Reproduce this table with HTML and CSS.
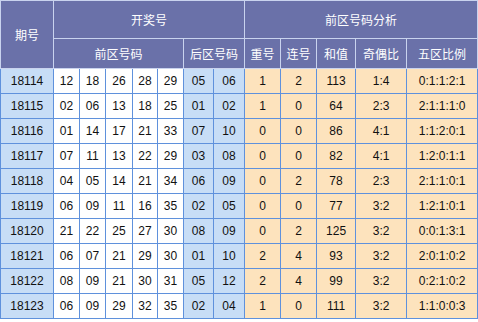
FILE: index.html
```html
<!DOCTYPE html>
<html>
<head>
<meta charset="utf-8">
<link rel="stylesheet" href="styles.css">
</head>
<body>
<table class="grid">
  <colgroup>
    <col class="c-issue">
    <col class="c26"><col class="c26"><col class="c27"><col class="c25"><col class="c26">
    <col class="c30"><col class="c31">
    <col class="c36"><col class="c36"><col class="c39"><col class="c51"><col class="c71">
  </colgroup>
  <thead>
    <tr class="h1">
      <th rowspan="2">期号</th>
      <th colspan="7">开奖号</th>
      <th colspan="5">前区号码分析</th>
    </tr>
    <tr class="h2">
      <th colspan="5">前区号码</th>
      <th colspan="2">后区号码</th>
      <th>重号</th><th>连号</th><th>和值</th><th>奇偶比</th><th>五区比例</th>
    </tr>
  </thead>
  <tbody>
    <tr><td class="blue">18114</td><td>12</td><td>18</td><td>26</td><td>28</td><td>29</td><td class="blue">05</td><td class="blue">06</td><td class="peach">1</td><td class="peach">2</td><td class="peach">113</td><td class="peach">1:4</td><td class="peach">0:1:1:2:1</td></tr>
    <tr><td class="blue">18115</td><td>02</td><td>06</td><td>13</td><td>18</td><td>25</td><td class="blue">01</td><td class="blue">02</td><td class="peach">1</td><td class="peach">0</td><td class="peach">64</td><td class="peach">2:3</td><td class="peach">2:1:1:1:0</td></tr>
    <tr><td class="blue">18116</td><td>01</td><td>14</td><td>17</td><td>21</td><td>33</td><td class="blue">07</td><td class="blue">10</td><td class="peach">0</td><td class="peach">0</td><td class="peach">86</td><td class="peach">4:1</td><td class="peach">1:1:2:0:1</td></tr>
    <tr><td class="blue">18117</td><td>07</td><td>11</td><td>13</td><td>22</td><td>29</td><td class="blue">03</td><td class="blue">08</td><td class="peach">0</td><td class="peach">0</td><td class="peach">82</td><td class="peach">4:1</td><td class="peach">1:2:0:1:1</td></tr>
    <tr><td class="blue">18118</td><td>04</td><td>05</td><td>14</td><td>21</td><td>34</td><td class="blue">06</td><td class="blue">09</td><td class="peach">0</td><td class="peach">2</td><td class="peach">78</td><td class="peach">2:3</td><td class="peach">2:1:1:0:1</td></tr>
    <tr><td class="blue">18119</td><td>06</td><td>09</td><td>11</td><td>16</td><td>35</td><td class="blue">02</td><td class="blue">05</td><td class="peach">0</td><td class="peach">0</td><td class="peach">77</td><td class="peach">3:2</td><td class="peach">1:2:1:0:1</td></tr>
    <tr><td class="blue">18120</td><td>21</td><td>22</td><td>25</td><td>27</td><td>30</td><td class="blue">08</td><td class="blue">09</td><td class="peach">0</td><td class="peach">2</td><td class="peach">125</td><td class="peach">3:2</td><td class="peach">0:0:1:3:1</td></tr>
    <tr><td class="blue">18121</td><td>06</td><td>07</td><td>21</td><td>29</td><td>30</td><td class="blue">01</td><td class="blue">10</td><td class="peach">2</td><td class="peach">4</td><td class="peach">93</td><td class="peach">3:2</td><td class="peach">2:0:1:0:2</td></tr>
    <tr><td class="blue">18122</td><td>08</td><td>09</td><td>21</td><td>30</td><td>31</td><td class="blue">05</td><td class="blue">12</td><td class="peach">2</td><td class="peach">4</td><td class="peach">99</td><td class="peach">3:2</td><td class="peach">0:2:1:0:2</td></tr>
    <tr><td class="blue">18123</td><td>06</td><td>09</td><td>29</td><td>32</td><td>35</td><td class="blue">02</td><td class="blue">04</td><td class="peach">1</td><td class="peach">0</td><td class="peach">111</td><td class="peach">3:2</td><td class="peach">1:1:0:0:3</td></tr>
  </tbody>
</table>
</body>
</html>
```
FILE: styles.css
```css
html, body {
  margin: 0;
  padding: 0;
  background: #ffffff;
}
.grid {
  border-collapse: collapse;
  table-layout: fixed;
  width: 477px;
  font-family: "Liberation Sans", "Noto Sans CJK SC", Arial, sans-serif;
  font-size: 12px;
  color: #111;
  border: 1px solid #6b98d8;
}
.c-issue { width: 53px; }
.c25 { width: 25px; }
.c26 { width: 26px; }
.c27 { width: 27px; }
.c30 { width: 30px; }
.c31 { width: 31px; }
.c36 { width: 36px; }
.c39 { width: 39px; }
.c51 { width: 51px; }
.c71 { width: 71px; }
.grid th {
  background: #6a71a9;
  color: #ffffff;
  font-weight: normal;
  font-size: 12px;
  font-family: "Noto Sans CJK SC", "Liberation Sans", sans-serif;
  border: 1px solid #c9d3ee;
  padding: 0;
  text-align: center;
  vertical-align: middle;
}
.grid .h1 th { height: 37px; }
.grid .h2 th { height: 29px; }
.grid td {
  border: 1px solid #5f91dc;
  background: #ffffff;
  text-align: center;
  vertical-align: middle;
  padding: 0;
  height: 24px;
}
.grid td.blue { background: #c7ddf6; }
.grid td.peach { background: #fde3bd; }
```
